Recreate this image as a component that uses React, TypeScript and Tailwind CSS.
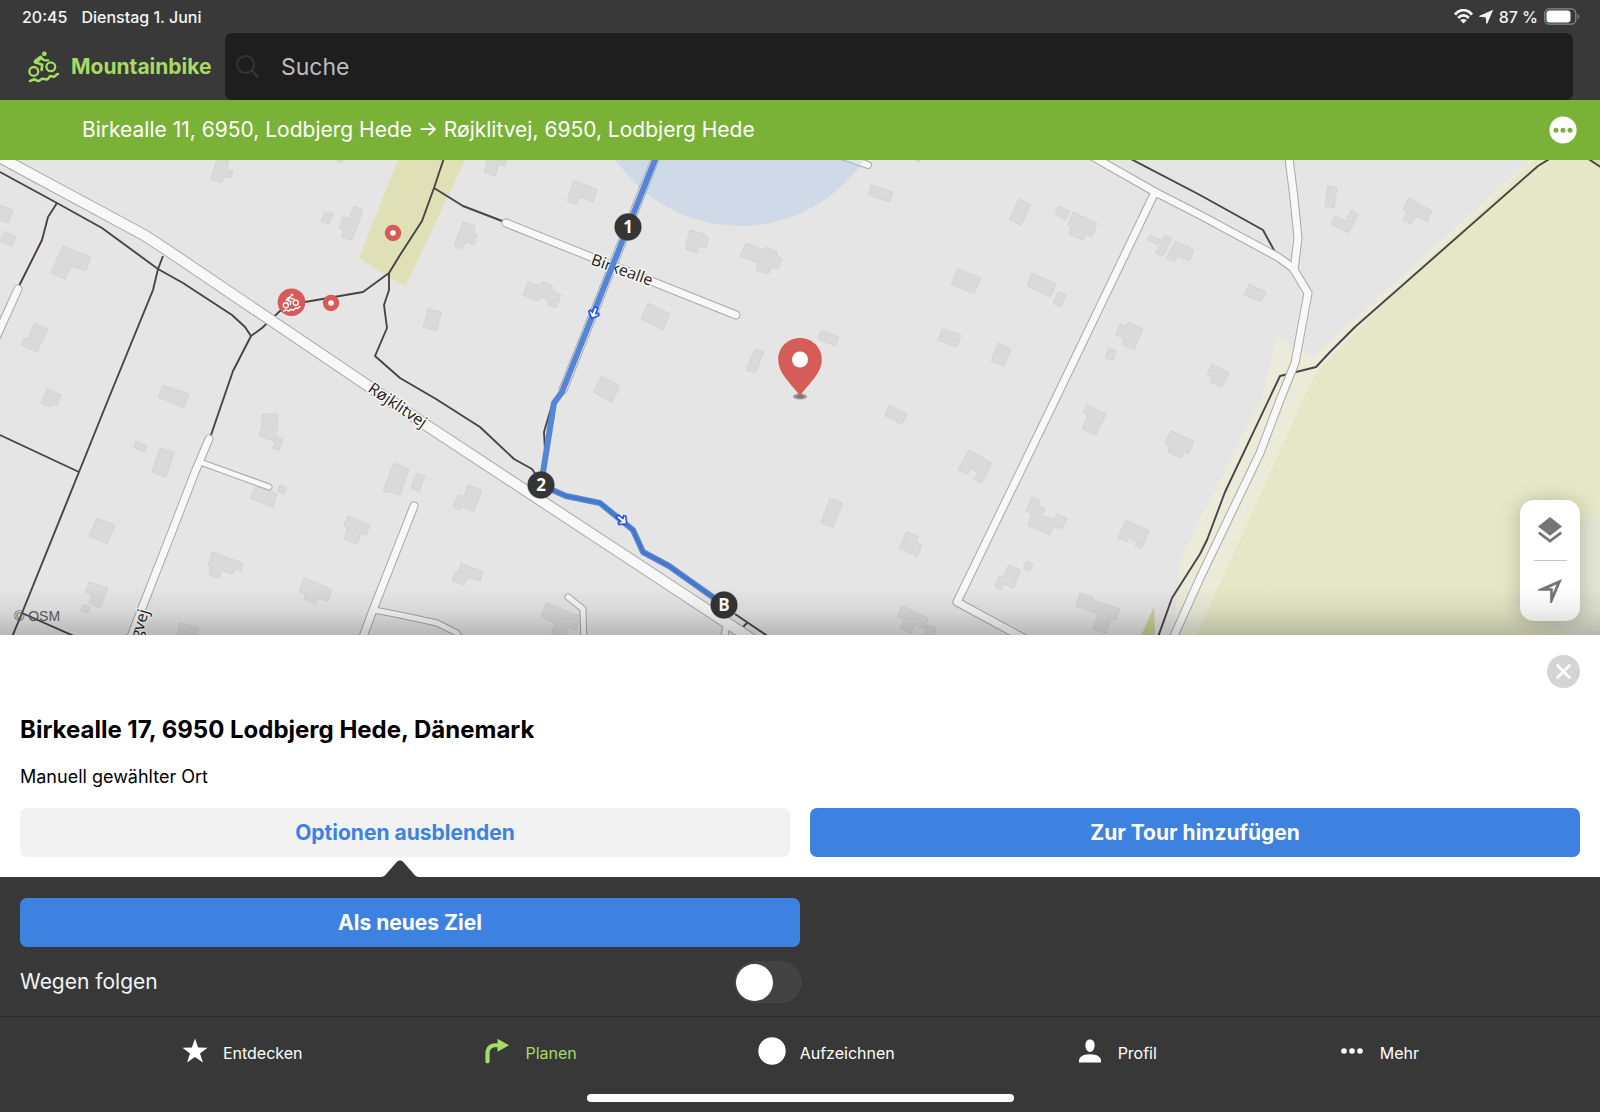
import { useState } from 'react';
import type { ReactNode } from 'react';

const buildings = [
  '217,160 229,160 227,168 233,172 231,178 225,176 221,183 211,179',
  '0,205 13,210 8,223 0,220',
  '5,231 16,237 12,246 0,241',
  '63,246 91,257 86,271 71,266 65,279 51,273',
  '34,323 48,329 37,352 21,345 24,338 28,339',
  '325,212 333,214 329,224 321,221',
  '354,206 363,210 352,240 342,237 344,230 339,228 343,217 349,219',
  '47,389 61,395 57,406 52,404 50,407 41,403',
  '163,385 189,394 184,408 158,397',
  '335,160 343,160 341,163',
  '487,160 507,160 505,166 499,164 495,176 484,172',
  '574,181 597,189 593,202 580,197 576,204 567,201',
  '463,222 475,226 474,233 477,235 474,245 466,242 462,249 454,246',
  '528,282 540,286 543,282 552,285 552,290 561,295 556,308 548,305 549,301 544,297 537,301 523,295',
  '428,309 441,312 437,331 423,327',
  '648,303 670,314 663,330 641,319',
  '690,230 704,234 709,238 706,248 699,246 697,253 685,249',
  '746,243 763,250 766,247 777,252 777,256 782,259 778,269 772,267 768,274 756,270 758,263 740,256',
  '755,349 764,352 755,373 746,370',
  '602,376 620,386 612,402 593,392',
  '915,160 920,160 919,162',
  '871,185 893,192 890,202 868,195',
  '1019,199 1031,205 1021,225 1009,220',
  '1058,206 1070,211 1066,220 1055,214',
  '1073,212 1097,223 1092,237 1085,234 1083,240 1069,234 1071,228 1068,225',
  '1150,235 1160,240 1158,245 1148,240',
  '1165,235 1172,239 1163,256 1156,253',
  '1175,241 1194,250 1189,261 1177,256 1174,262 1166,258',
  '958,269 981,278 974,294 951,284',
  '1032,273 1056,284 1051,297 1027,286',
  '1058,292 1066,295 1061,307 1053,303',
  '822,330 839,337 835,346 818,339',
  '942,329 961,335 957,347 938,340',
  '998,343 1011,349 1004,366 991,361',
  '1120,324 1126,326 1128,322 1143,329 1134,350 1122,344 1124,339 1116,335',
  '1109,348 1116,351 1113,361 1105,358',
  '1328,186 1337,188 1334,208 1325,206',
  '1351,210 1359,214 1348,233 1331,224 1335,216 1346,221',
  '1409,198 1432,211 1427,222 1417,216 1411,224 1403,220 1407,212 1403,209',
  '1249,284 1266,292 1261,302 1244,295',
  '1212,364 1229,373 1222,387 1210,382 1212,377 1207,375',
  '262,414 278,414 277,431 274,441 259,436 262,426',
  '277,436 283,439 279,450 273,448',
  '136,441 147,446 144,452 134,448',
  '160,448 174,452 166,477 152,472',
  '256,486 277,494 273,507 250,498',
  '280,485 286,487 284,494 278,492',
  '97,518 115,525 107,544 89,536',
  '212,552 243,563 241,571 235,569 233,574 221,571 219,578 209,575 211,567 208,565',
  '89,582 108,588 100,608 89,603 92,595 85,592',
  '83,605 90,607 88,613 81,611',
  '304,578 332,589 328,601 318,599 315,604 304,599 305,594 299,591',
  '180,623 199,628 196,636 177,636',
  '348,516 370,525 366,535 359,533 360,537 357,544 344,539 347,529 344,525',
  '394,463 409,469 400,495 383,491',
  '417,473 425,476 419,492 411,488',
  '468,485 482,490 474,511 461,507 460,510 453,507 458,495 464,497',
  '461,563 483,572 480,581 468,577 464,585 452,581 455,573 459,571',
  '546,603 580,616 576,630 567,627 566,636 551,636 555,623 541,617',
  '889,405 907,414 902,424 885,416',
  '969,450 992,463 982,483 974,480 978,473 971,469 967,474 958,470',
  '830,498 843,503 833,527 821,523',
  '907,532 919,537 916,542 922,545 917,557 899,548',
  '1087,405 1106,414 1096,435 1082,429 1088,416 1083,412',
  '1171,431 1194,441 1189,454 1183,452 1181,458 1168,452 1169,446 1165,443',
  '1032,497 1040,500 1038,505 1045,509 1042,516 1054,520 1057,514 1067,518 1062,529 1054,526 1050,535 1028,525 1032,514 1026,511',
  '1126,520 1149,531 1141,549 1135,546 1137,542 1129,538 1127,542 1118,538',
  '1027,561 1033,564 1030,571 1023,568',
  '1009,565 1021,570 1013,588 1004,584 1001,590 995,587 999,576 1003,577',
  '1080,593 1093,597 1093,600 1120,609 1116,620 1111,619 1106,633 1093,629 1099,614 1076,606',
  '902,606 928,618 924,629 915,625 911,633 900,628 904,619 897,617',
  '927,625 936,628 933,636 924,636',
];

const paths = [
  '0,172 57,203 102,228 158,269 183,283 232,315 245,327 251,336 233,371 223,400 211,435',
  '57,203 48,217 42,240 19,286',
  '163,256 158,269 153,290 108,400 79,472 22,613 12,637',
  '0,435 79,472',
  '22,613 76,637',
  '251,336 262,328 280,311 305,302 363,292 389,273 400,255 422,221 434,188 444,158',
  '389,273 389,290 384,305 387,328 375,356 400,378 436,399 480,427 514,459 532,469 541,482',
  '434,188 463,206 502,221',
  '552,405 544,432 545,450',
  '1129,158 1200,195 1263,230 1275,252',
  '1551,158 1538,166 1355,327 1330,352 1316,367 1280,376 1225,492 1207,540 1200,554 1172,598 1158,637',
  '1587,158 1602,168',
  '735,614 769,637',
  '747,623 742,628',
];

// [points, casing width, fill width]
const roads: [string, number, number][] = [
  ['18,289 -6,342', 9, 7],
  ['506,223 736,315', 9, 7],
  ['658,152 628,227 563,390', 9, 7],
  ['836,154 868,165', 8, 6],
  ['209,439 195,472 173,529 142,608 126,650', 9, 7],
  ['200,462 269,487', 7, 5],
  ['414,506 373,610 360,645', 9, 7],
  ['374,610 400,615 437,623 457,633 464,645', 7, 5],
  ['568,597 583,609 584,645', 7, 5],
  ['727,622 722,650', 8, 6],
  ['1155,192 1055,400 957,602 1040,647', 9, 7],
  ['1288,150 1294,198 1298,238 1294,270', 9, 7],
  ['1083,151 1155,192 1200,215 1278,257 1293,268 1308,293 1295,363 1280,400 1260,453 1200,578 1170,645', 9, 7],
  ['-10,152 144,235 167,250 423,423 712,613 780,658', 12, 10],
];

const navItems = [
  { label: 'Entdecken', icon: <StarIcon />, active: false },
  { label: 'Planen', icon: <TurnIcon />, active: true },
  { label: 'Aufzeichnen', icon: <RecordIcon />, active: false },
  { label: 'Profil', icon: <ProfileIcon />, active: false },
  { label: 'Mehr', icon: <MoreIcon />, active: false },
];

function BikeGlyph() {
  return (
    <g fill="none" stroke="currentColor" strokeWidth="2.300" strokeLinecap="round" strokeLinejoin="round">
      <circle cx="16.3" cy="2.8" r="2.4" fill="currentColor" stroke="none" />
      <circle cx="5.8" cy="20.4" r="4.4" />
      <circle cx="22.8" cy="15.8" r="4.4" />
      <path d="M7.600 10.600 12.400 6.800" strokeWidth="4.200" />
      <path d="M12.6 6.2 15.8 9.2 20.2 9.4" />
      <path d="M7.6 11.4 14.2 13.8 13.6 19" strokeWidth="2.6" />
      <path d="M2 30c2-.4 2.600-1.600 4.300-1.600S8.600 30 10.300 30s2.400-2.200 4-2.300 3.100 1.300 5 .6 1.800-3.100 3.400-3.300 1.900 1 3.300.7 2-2.400 4-2.700" strokeWidth="2.600" />
    </g>
  );
}

function StarIcon() {
  return (
    <svg width="26" height="26" viewBox="0 0 26 26" fill="currentColor" aria-hidden="true">
      <path d="M13 .5l3.100 9.100 9.400.2-7.500 5.600 2.900 9.200L13 19l-7.900 5.600L8 15.400.5 9.800l9.400-.2z" />
    </svg>
  );
}

function TurnIcon() {
  return (
    <svg width="24" height="26" viewBox="0 0 24 26" fill="currentColor" aria-hidden="true">
      <path d="M12.500.8 24 7.300 12.500 13.800V9.200h-1.500C6.500 9.200 4.600 11.500 4.600 15.500v7.800a2.100 2.100 0 0 1-4.200 0V15.500C.4 9 4.500 5.200 10.500 5.200h2z" />
    </svg>
  );
}

function RecordIcon() {
  return (
    <svg width="28" height="28" viewBox="0 0 28 28" fill="currentColor" aria-hidden="true">
      <circle cx="14" cy="14" r="13.700" />
    </svg>
  );
}

function ProfileIcon() {
  return (
    <svg width="22" height="24" viewBox="0 0 22 24" fill="currentColor" aria-hidden="true">
      <path d="M11 .5c3 0 4.600 2.300 4.600 5.800S13.500 13 11 13 6.400 9.800 6.400 6.300 8 .5 11 .5z" />
      <path d="M0 23.500v-1.500c0-3.800 3.500-6.700 11-6.700s11 2.900 11 6.700v1.500z" />
    </svg>
  );
}

function MoreIcon() {
  return (
    <svg width="24" height="24" viewBox="0 0 24 24" fill="currentColor" aria-hidden="true">
      <circle cx="4" cy="12" r="2.800" />
      <circle cx="12" cy="12" r="2.800" />
      <circle cx="20" cy="12" r="2.800" />
    </svg>
  );
}

function RouteArrow({ x, y, angle }: { x: number; y: number; angle: number }) {
  return (
    <path
      transform={`translate(${x} ${y}) rotate(${angle})`}
      d="M-6-1.800H0L-1.500-4.500 0.500-5.500 6 0 0.500 5.500-1.500 4.500 0 1.800H-6z"
      fill="#fff"
      stroke="#2450f5"
      strokeWidth="1.600"
      strokeLinejoin="round"
    />
  );
}

function RouteStop({ x, y, children }: { x: number; y: number; children: ReactNode }) {
  return (
    <g>
      <circle cx={x} cy={y} r="14" fill="#000" opacity="0.150" />
      <circle cx={x} cy={y} r="13.400" fill="#353535" />
      <text x={x} y={y + 6} textAnchor="middle" fontSize="17" fontWeight="700" fill="#fff">
        {children}
      </text>
    </g>
  );
}

function PoiDot({ x, y }: { x: number; y: number }) {
  return (
    <g>
      <circle cx={x} cy={y} r="8.200" fill="#d65a57" />
      <circle cx={x} cy={y} r="2.800" fill="#fff" />
    </g>
  );
}

function MapCanvas() {
  return (
    <svg
      className="block size-full font-['Open_Sans','Noto_Sans',sans-serif]"
      viewBox="0 160 1600 475"
      preserveAspectRatio="xMidYMid slice"
      role="img"
      aria-label="Karte"
    >
      <rect x="-400" y="-400" width="2400" height="1600" fill="#e5e5e5" />

      {/* Land use */}
      <polygon points="398,160 465,160 405,287 359,258" fill="#dfe0b6" />
      <polygon points="1530,160 1313,357 1277,337 1261,400 1200,518 1180,560 1174,636 1600,636 1600,160" fill="#eaecd9" />
      <polygon points="1534,160 1483,210 1433,255 1357,330 1315,375 1303,399 1258,500 1196,636 1600,636 1600,160" fill="#e5e7c6" />
      <polygon points="1585,513 1600,520 1600,636 1562,636 1540,621" fill="#e3e5d4" />
      <polygon points="1154,607 1155,636 1141,636" fill="#ccd196" />
      <polygon points="1588,160 1600,160 1600,168" fill="#d3deaa" />

      <g fill="#dadada" stroke="#cfcfcf" strokeWidth="0.700">
        {buildings.map((points) => (
          <polygon key={points} points={points} />
        ))}
      </g>

      <g fill="none" stroke="#4a4344" strokeWidth="1.900" strokeLinejoin="round">
        {paths.map((points) => (
          <polyline key={points} points={points} />
        ))}
      </g>

      {/* Casings first so that junctions merge */}
      <g fill="none" stroke="#a8a8a8" strokeLinecap="round" strokeLinejoin="round">
        {roads.map(([points, casing]) => (
          <polyline key={points} points={points} strokeWidth={casing} />
        ))}
      </g>
      <g fill="none" stroke="#f8f8f8" strokeLinecap="round" strokeLinejoin="round">
        {roads.map(([points, , fill]) => (
          <polyline key={points} points={points} strokeWidth={fill} />
        ))}
      </g>

      <circle cx="740" cy="76" r="150" fill="#a6c4ec" opacity="0.350" />

      <g fontSize="16" fontWeight="500" fill="#1c1c1c" stroke="#f8f8f8" strokeWidth="3" strokeLinejoin="round" paintOrder="stroke">
        <text transform="translate(590 264) rotate(20)">Birkealle</text>
        <text transform="translate(367 391) rotate(34)">Røjklitvej</text>
        <text transform="translate(149 611) rotate(-74)" textAnchor="end">
          gvej
        </text>
      </g>

      {/* Planned route */}
      <g fill="none" strokeLinejoin="round" strokeLinecap="round">
        <path d="M659 150 628 227 562 392 554 403 541 485 566 496 600 503 633 530 643 552 669 566 724 605" stroke="#5685d6" strokeWidth="6" />
        <path d="M541 485 566 496 600 503 633 530 643 552 669 566 724 605" stroke="#4477c8" strokeWidth="3" />
      </g>
      <RouteArrow x={594} y={313} angle={112} />
      <RouteArrow x={622} y={520} angle={38} />
      <RouteStop x={628} y={227}>1</RouteStop>
      <RouteStop x={541} y={485}>2</RouteStop>
      <RouteStop x={724} y={605}>B</RouteStop>

      <PoiDot x={393} y={233} />
      <PoiDot x={331} y={303} />
      <circle cx="291.500" cy="302.300" r="13.800" fill="#d65a57" />
      <g className="text-white" transform="translate(282.500 293.500) scale(0.580)">
        <BikeGlyph />
      </g>

      {/* Selected place */}
      <ellipse cx="800" cy="396.500" rx="7" ry="3" fill="#9a9a9a" />
      <ellipse cx="800" cy="396.500" rx="4" ry="1.500" fill="#777" />
      <path d="M800 338c12.300 0 21.800 9.700 21.800 21.500C821.800 374 808 384 800 396c-8-12-21.800-22-21.800-36.500C778.200 347.700 787.700 338 800 338z" fill="#d65c58" />
      <circle cx="800" cy="359.500" r="8" fill="#fff" />

      <text x="14" y="621" fontSize="14" className="font-['Liberation_Sans',sans-serif]" fill="#5c5c5c">
        © OSM
      </text>
    </svg>
  );
}

function StatusBar() {
  return (
    <div className="flex h-[33px] items-center justify-between pr-5 pl-[22px] text-base font-medium text-gray-100">
      <div className="flex gap-3.5">
        <span>20:45</span>
        <span>Dienstag 1. Juni</span>
      </div>
      <div className="flex items-center gap-1.5">
        <svg width="19" height="15" viewBox="0 0 19 15" aria-hidden="true">
          <g fill="none" stroke="currentColor" strokeWidth="2.800">
            <path d="M1 5.500C5.800-.3 13.200-.3 18 5.500" />
            <path d="M4.200 9c3-3.500 7.600-3.500 10.600 0" />
          </g>
          <path d="M9.500 14.500 6.200 11.300c1.800-1.700 4.800-1.700 6.600 0z" fill="currentColor" />
        </svg>
        <svg width="14" height="14" viewBox="0 0 14 14" fill="currentColor" aria-hidden="true">
          <path d="M13.400.6 7.800 13.400 7.200 7 .6 6.300z" stroke="currentColor" strokeWidth="1" strokeLinejoin="round" />
        </svg>
        <span>87 %</span>
        <svg width="36" height="17" viewBox="0 0 36 17" aria-hidden="true">
          <rect x=".8" y=".8" width="31" height="15.400" rx="4.500" fill="none" stroke="#8a8a8a" strokeWidth="1.300" />
          <rect x="2.500" y="2.500" width="24" height="12" rx="3" fill="#fff" />
          <path d="M33.600 5.700c2 1 2 4.600 0 5.600z" fill="#8a8a8a" />
        </svg>
      </div>
    </div>
  );
}

function Header() {
  return (
    <header className="bg-[#393939]">
      <StatusBar />
      <div className="flex h-[67px] items-center pr-[27px] pl-7">
        <button type="button" className="flex w-[197px] shrink-0 items-center gap-3 text-[#a6dc62]">
          <svg width="31" height="32" viewBox="0 0 31 32" aria-hidden="true">
            <BikeGlyph />
          </svg>
          <span className="text-[21px] font-bold">Mountainbike</span>
        </button>
        <label className="flex h-full flex-1 items-center gap-[22px] rounded-[7px] bg-[#1e1e1e] pl-[11px]">
          <svg width="23" height="23" viewBox="0 0 23 23" fill="none" stroke="#353535" strokeWidth="2" strokeLinecap="round" aria-hidden="true">
            <circle cx="9.500" cy="9.500" r="8.500" />
            <path d="M16 16l5.500 5.500" strokeWidth="2.500" />
          </svg>
          <input
            type="search"
            aria-label="Suche"
            placeholder="Suche"
            className="h-full min-w-0 flex-1 bg-transparent text-[23px] text-white outline-none placeholder:text-[#bcbcbc]"
          />
        </label>
      </div>
      <div className="flex h-[60px] items-center justify-between bg-[#7ab238] pr-[23px] pl-[82px] text-white">
        <h1 className="text-[21px]">Birkealle 11, 6950, Lodbjerg Hede → Røjklitvej, 6950, Lodbjerg Hede</h1>
        <button type="button" aria-label="Tour-Menü">
          <svg width="28" height="28" viewBox="0 0 28 28" aria-hidden="true">
            <circle cx="14" cy="14" r="13.600" fill="#fff" />
            <g fill="#7ab238">
              <circle cx="7" cy="14.300" r="2.500" />
              <circle cx="14" cy="14.300" r="2.500" />
              <circle cx="21" cy="14.300" r="2.500" />
            </g>
          </svg>
        </button>
      </div>
    </header>
  );
}

function MapControls() {
  return (
    <div className="absolute right-5 bottom-[14px] flex w-[60px] flex-col items-center rounded-[14px] bg-white text-[#757575] shadow-[0_2px_20px_rgba(0,0,0,0.22)]">
      <button type="button" aria-label="Kartenebenen" className="flex h-[60px] w-full items-center justify-center">
        <svg width="24" height="26" viewBox="0 0 24 26" aria-hidden="true">
          <path d="M12 0 24 9.500 12 18.800 0 9.500z" fill="currentColor" />
          <path d="M.8 15.600 12 24l11.200-8.400" fill="none" stroke="currentColor" strokeWidth="2.600" />
        </svg>
      </button>
      <div className="h-px w-[33px] bg-[#c4c4c4]" />
      <button type="button" aria-label="Mein Standort" className="flex h-[60px] w-full items-center justify-center">
        <svg width="24" height="24" viewBox="0 0 24 24" fill="currentColor" fillRule="evenodd" aria-hidden="true">
          <path d="M24 0 13.800 24H12.200V11.800H0v-1.300zM18.600 5.400 10.500 9.200H14.800V14.200z" />
        </svg>
      </button>
    </div>
  );
}

function PlaceSheet() {
  return (
    <section className="relative bg-white px-5 py-5 text-black">
      <div className="flex justify-end">
        <button type="button" aria-label="Schließen">
          <svg width="33" height="33" viewBox="0 0 33 33" aria-hidden="true">
            <circle cx="16.500" cy="16.500" r="16.500" fill="#d4d4d4" />
            <path d="M10.500 10.500l12 12m0-12-12 12" stroke="#fff" strokeWidth="2.800" strokeLinecap="round" />
          </svg>
        </button>
      </div>
      <h2 className="mt-[26px] text-2xl leading-8 font-bold">Birkealle 17, 6950 Lodbjerg Hede, Dänemark</h2>
      <p className="mt-[19px] text-lg leading-6">Manuell gewählter Ort</p>
      <div className="mt-[19px] grid grid-cols-2 gap-5 text-[21px] font-bold">
        <button type="button" className="h-[49px] rounded-[7px] bg-[#f2f2f2] text-[#3d82e0]">
          Optionen ausblenden
        </button>
        <button type="button" className="h-[49px] rounded-[7px] bg-[#3d82e0] text-white">
          Zur Tour hinzufügen
        </button>
      </div>
      {/* Pointer from the options panel up to its button */}
      <svg className="absolute bottom-0 left-1/4 -translate-x-1/2" width="40" height="17" viewBox="0 0 40 17" aria-hidden="true">
        <path d="M0 17c4 0 5.500-2 7.500-4.500L16.500 2.300C18.500 0 21.500 0 23.500 2.300L32.500 12.500C34.500 15 36 17 40 17z" fill="#383838" />
      </svg>
    </section>
  );
}

function OptionsPanel() {
  const [followPaths, setFollowPaths] = useState(false);

  return (
    <section className="grid grid-cols-2 pt-[21px] pb-[13px]">
      <div className="flex flex-col gap-3.5 pl-5">
        <button type="button" className="h-[49px] rounded-[7px] bg-[#3d82e0] text-[21px] font-bold text-white">
          Als neues Ziel
        </button>
        <label className="-mr-0.5 flex h-[42px] items-center justify-between text-[21px] text-gray-100">
          Wegen folgen
          <input
            type="checkbox"
            role="switch"
            checked={followPaths}
            onChange={(e) => setFollowPaths(e.target.checked)}
            className="flex h-[42px] w-[68px] appearance-none items-center rounded-full bg-[#434343] px-0.5 before:block before:size-[37px] before:rounded-full before:bg-white checked:justify-end checked:bg-[#7ab238]"
          />
        </label>
      </div>
    </section>
  );
}

function TabBar() {
  return (
    <nav className="border-t border-[#2b2b2b] pb-2.5">
      <ul className="flex h-[72px] items-center justify-evenly">
        {navItems.map(({ label, icon, active }) => (
          <li key={label}>
            <a
              href="#"
              aria-current={active ? 'page' : undefined}
              className={`flex items-center gap-3.5 text-base ${active ? 'text-[#a6dc62]' : 'text-white'}`}
            >
              <span className="flex w-7 justify-center pb-1">{icon}</span>
              {label}
            </a>
          </li>
        ))}
      </ul>
      <div className="mx-auto mt-[5px] h-2 w-[427px] rounded-full bg-white" />
    </nav>
  );
}

export default function App() {
  return (
    <div className="flex h-screen min-h-[800px] flex-col bg-[#383838] font-['Inter',sans-serif]">
      <Header />
      <main className="flex min-h-0 flex-1 flex-col">
        <div className="relative min-h-0 flex-1 overflow-hidden">
          <MapCanvas />
          <MapControls />
          <div className="pointer-events-none absolute inset-x-0 bottom-0 h-12 bg-linear-to-t from-black/20 via-black/6 to-transparent" />
        </div>
        <PlaceSheet />
        <OptionsPanel />
      </main>
      <TabBar />
    </div>
  );
}
